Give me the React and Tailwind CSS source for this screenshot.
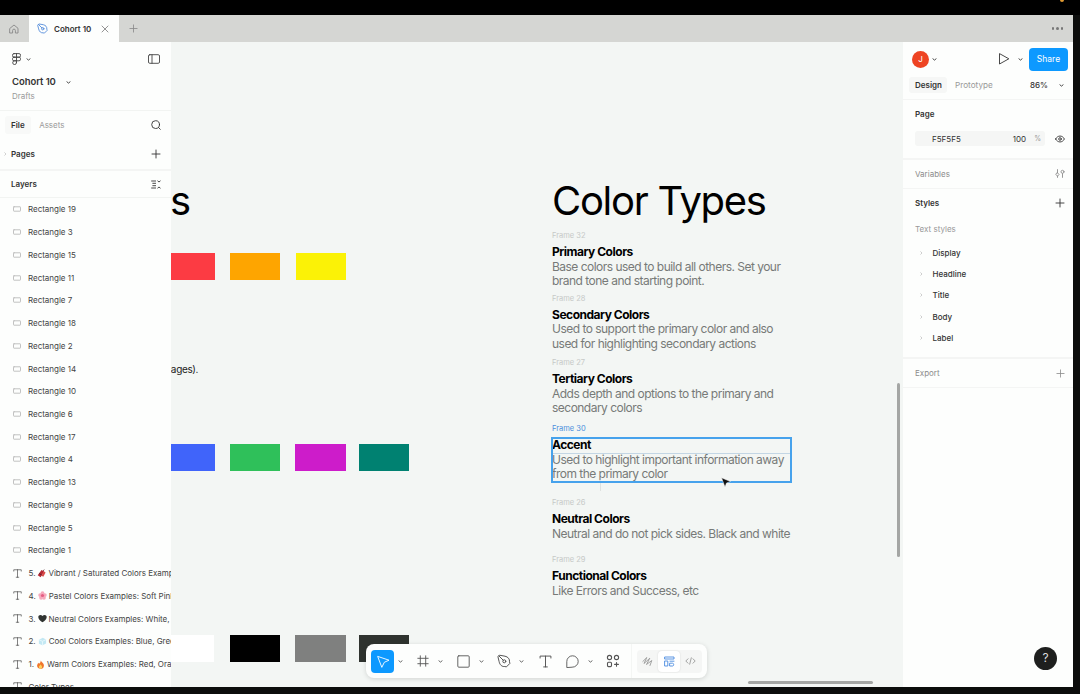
import React from 'react';

const rectangles = [19, 3, 15, 11, 7, 18, 2, 14, 10, 6, 17, 4, 13, 9, 5, 1];

const textLayers = [
    { num: '5.', emoji: 'firecracker', label: 'Vibrant / Saturated Colors Examples' },
    { num: '4.', emoji: 'flower', label: 'Pastel Colors Examples: Soft Pink' },
    { num: '3.', emoji: 'heart', label: 'Neutral Colors Examples: White, Black' },
    { num: '2.', emoji: 'ice', label: 'Cool Colors Examples: Blue, Green' },
    { num: '1.', emoji: 'fire', label: 'Warm Colors Examples: Red, Orange' },
];

const swatches = [
    'left-0 top-[211px] w-[44px] bg-[#fc3b43]',
    'left-[59px] top-[211px] w-[50px] bg-[#fea500]',
    'left-[125px] top-[211px] w-[50px] bg-[#fbf206]',
    'left-0 top-[402px] w-[44px] bg-[#4064fa]',
    'left-[59px] top-[402px] w-[50px] bg-[#2fc05a]',
    'left-[124px] top-[402px] w-[51px] bg-[#cd1cca]',
    'left-[188px] top-[402px] w-[50px] bg-[#008171]',
    'left-0 top-[593px] w-[43px] bg-white',
    'left-[59px] top-[593px] w-[50px] bg-black',
    'left-[124px] top-[593px] w-[51px] bg-[#7f807f]',
    'left-[188px] top-[593px] w-[50px] bg-[#2f332f]',
];

const frames = [
    { pos: 'top-[187px]', frame: 'Frame 32', title: 'Primary Colors', lines: ['Base colors used to build all others. Set your', 'brand tone and starting point.'] },
    { pos: 'top-[249.5px]', frame: 'Frame 28', title: 'Secondary Colors', lines: ['Used to support the primary color and also', 'used for highlighting secondary actions'] },
    { pos: 'top-[314px]', frame: 'Frame 27', title: 'Tertiary Colors', lines: ['Adds depth and options to the primary and', 'secondary colors'] },
    { pos: 'top-[380px]', frame: 'Frame 30', title: 'Accent', active: true, lines: ['Used to highlight important information away', 'from the primary color'] },
    { pos: 'top-[454px]', frame: 'Frame 26', title: 'Neutral Colors', lines: ['Neutral and do not pick sides. Black and white'] },
    { pos: 'top-[511px]', frame: 'Frame 29', title: 'Functional Colors', lines: ['Like Errors and Success, etc'] },
];

const Icon = ({ className = 'size-3', box = '0 0 12 12', children, sw = 0.9 }) => (
    <svg className={`shrink-0 ${className}`} viewBox={box} fill="none" stroke="currentColor" strokeWidth={sw} strokeLinecap="round" strokeLinejoin="round">
        {children}
    </svg>
);

const Chevron = ({ className = '' }) => (
    <Icon className={`h-[3px] w-[5px] ${className}`} box="0 0 5 3"><path d="M.9.8 2.5 2.1 4.1.8" /></Icon>
);

const Plus = ({ className = 'size-[10px]' }) => (
    <Icon className={className} box="0 0 10 10"><path d="M5 1v8M1 5h8" /></Icon>
);

const PenIcon = ({ className = 'size-[14px]', sw = 1 }) => (
    <Icon className={className} box="0 0 14 14" sw={sw}>
        <path d="M1.2 2.4 2.4 1.2 8 2.2c3 .6 4.9 2.9 4.5 5.6l.4 1.6-3.5 3.5-1.6-.4C5.1 12.9 2.8 11 2.2 8z" />
        <path d="m1.8 1.8 4.5 4.5" />
        <circle cx="7.3" cy="7.3" r="1.5" />
    </Icon>
);

const Emoji = ({ name }) => (
    <svg className="mx-[2px] size-[9px] shrink-0" viewBox="0 0 10 10">
        {name === 'firecracker' && <g><path d="m.8 7 4.2-6 3 1.8-4 6.5z" fill="#b52733" /><path d="m5 7.5 2.5-5 2 1.3L7 8.5z" fill="#d94a46" /><path d="m2.5 5 2.6 1.6M7 2l1-1.3" stroke="#51252a" /></g>}
        {name === 'flower' && <g fill="#f6a9bc"><circle cx="5" cy="2.4" r="2.1" /><circle cx="2.4" cy="4.5" r="2.1" /><circle cx="7.6" cy="4.5" r="2.1" /><circle cx="3.4" cy="7.5" r="2.1" /><circle cx="6.6" cy="7.5" r="2.1" /><circle cx="5" cy="5" r="1.8" fill="#e45e83" /></g>}
        {name === 'heart' && <path d="M5 9.3C2.5 7.5.3 5.7.3 3.3.3 1 3.5.1 5 2.3 6.5.1 9.7 1 9.7 3.3 9.7 5.7 7.5 7.5 5 9.3z" fill="#303431" />}
        {name === 'ice' && <g><path d="M1 3 5.3.8 9 2.8v4.4L5 9.3 1 7.5z" fill="#c3e8f3" /><path d="m1 3 4 1.8 4-2M5 4.8v4.5" stroke="#e8f8fc" fill="none" /></g>}
        {name === 'fire' && <g><path d="M5.2.2c.5 2 3.8 3.2 3.6 6.1C8.6 8.7 7 9.8 5 9.8S1.3 8.6 1.2 6.4c0-1.5.8-2.3 1.3-3.4l.9 1.2C4.8 3 5.4 1.8 5.2.2z" fill="#f0762c" /><path d="M5 4.8c.3 1 1.900 1.700 1.800 3C6.700 9 6 9.600 5 9.600S3.200 9 3.200 7.800C3.200 6.600 4.600 6.200 5 4.800z" fill="#fbd15c" /></g>}
    </svg>
);

const TIcon = ({ className = 'size-[9px]' }) => (
    <Icon className={className} box="0 0 12 12"><path d="M1 2.8V1h10v1.8M6 1v10M4.3 11h3.4" /></Icon>
);

const TabBar = () => (
    <div className="flex h-[27px] shrink-0 items-center bg-[#d5d6d3] text-[#888]">
        <div className="flex w-[28px] justify-center">
            <Icon className="size-[10px]" box="0 0 10 10"><path d="M1 4.3 5 1l4 3.3V9H6.4V6.5a1.4 1.4 0 0 0-2.8 0V9H1z" /></Icon>
        </div>
        <div className="ml-px flex h-full w-[90px] items-center bg-[#fdfefd] pl-[8px]">
            <PenIcon className="size-[11px] text-[#5a91dc]" sw={1.2} />
            <span className="ml-[6px] w-[38px] whitespace-nowrap text-[8px] font-semibold text-[#333]">Cohort 10</span>
            <Icon className="ml-[9px] size-2" box="0 0 8 8"><path d="m1 1 6 6M7 1 1 7" /></Icon>
        </div>
        <Plus className="ml-[10px] size-[9px]" />
        <div className="ml-auto mr-[10px] flex gap-[2px]">
            <i className="size-[2.5px] rounded-full bg-[#777]" />
            <i className="size-[2.5px] rounded-full bg-[#777]" />
            <i className="size-[2.5px] rounded-full bg-[#777]" />
        </div>
    </div>
);

const LeftPanel = () => (
    <aside className="flex w-[171px] shrink-0 flex-col overflow-hidden bg-[#fdfefd] text-[#444]">
        <div className="h-[69px] shrink-0 border-b border-[#f2f4f2] pl-3 pr-[11px] pt-[10px]">
            <div className="flex h-[14px] items-center">
                <Icon className="h-[12px] w-[9px]" box="0 0 9 12"><rect x=".5" y=".6" width="8" height="3.6" rx="1.5" /><rect x=".5" y="4.2" width="8" height="3.6" rx="1.5" /><path d="M4.5.6v9M4.5 7.8H2.3a1.9 1.9 0 1 0 2.2 1.8" /></Icon>
                <Chevron className="ml-[5px]" />
                <Icon className="ml-auto h-[10px] w-[12px]" box="0 0 12 10"><rect x=".5" y=".7" width="11" height="8.6" rx="1.3" /><path d="M4 .7v8.6" /></Icon>
            </div>
            <div className="mt-[8px] flex h-4 items-center text-[9.5px] font-semibold tracking-[-0.06px] text-[#333]">
                <span className="w-[44px] whitespace-nowrap">Cohort 10</span><Chevron className="ml-[10px]" />
            </div>
            <div className="h-3 text-[8px] leading-3 text-[#999]">Drafts</div>
        </div>
        <div className="flex h-[28px] shrink-0 items-center pl-[5px] pr-[10px] text-[8px]">
            <span className="rounded-[3px] bg-[#f8f9f8] px-[6px] py-[3px] font-semibold text-[#333]">File</span>
            <span className="ml-[8.5px] text-[#9b9b9b]">Assets</span>
            <Icon className="ml-auto size-[10px] text-[#333]" box="0 0 10 10"><circle cx="4.6" cy="4.6" r="3.9" /><path d="m7.5 7.5 1.8 1.8" /></Icon>
        </div>
        <div className="flex h-[32px] shrink-0 items-center border-b-2 border-[#f4f5f4] pl-[4px] pr-[10px] text-[8px] font-semibold text-[#333]">
            <Icon className="h-[4px] w-[3px] text-[#ccc]" box="0 0 3 4"><path d="m.7.7 1.3 1.3L.7 3.3" /></Icon>
            <span className="ml-[4px]">Pages</span><Plus className="ml-auto size-[10px]" />
        </div>
        <div className="flex h-[27px] shrink-0 items-center border-b border-[#f2f4f2] pl-[11px] pr-[10px] text-[8px] font-semibold text-[#333]">
            Layers
            <Icon className="ml-auto h-[9px] w-[10px]" box="0 0 10 9"><path d="M.6 1h4M1.8 3.3h2.8M1.8 5.7h2.8M.6 8h4M6.8 1l1.2 1 1.2-1M6.8 8l1.2-1 1.2 1" /></Icon>
        </div>
        <div className="flex flex-col text-[8px] tracking-[-0.02px]">
            {rectangles.map(n => (
                <div key={n} className="flex h-[22.74px] shrink-0 items-center pl-[13px]">
                    <Icon className="h-[6px] w-[8px] text-[#bbb]" box="0 0 8 6"><rect x=".5" y=".8" width="7" height="4.4" rx=".5" /></Icon>
                    <span className="ml-[7px]">Rectangle {n}</span>
                </div>
            ))}
            {textLayers.map(l => (
                <div key={l.num} className="flex h-[22.74px] shrink-0 items-center whitespace-nowrap pl-[13px]">
                    <TIcon /><span className="ml-[6.5px]">{l.num}</span><Emoji name={l.emoji} /><span>{l.label}</span>
                </div>
            ))}
            <div className="flex h-[22.74px] shrink-0 items-center pl-[13px]">
                <TIcon /><span className="ml-[6.5px]">Color Types</span>
            </div>
        </div>
    </aside>
);

const Toolbar = () => (
    <div className="absolute left-[195px] top-[602px] flex h-[34px] w-[341px] items-center rounded-[8px] bg-[#fdfefd] pl-[5px] text-[#555] shadow-[0_1px_5px_rgba(0,0,0,0.14)]">
        <div className="flex size-[23px] items-center justify-center rounded-[4px] bg-[#0d99ff] text-white">
            <Icon className="ml-[2px] size-[13px]" box="0 0 13 13"><path d="M1 1.5 12 5.2 7.3 7.3 5 12z" /></Icon>
        </div>
        <Chevron className="ml-[4px]" />
        <Icon className="ml-[14px] size-[12px]" box="0 0 12 12"><path d="M3.3.8v10.4M8.7.8v10.4M.8 3.3h10.4M.8 8.7h10.4" /></Icon>
        <Chevron className="ml-[9px]" />
        <Icon className="ml-[14px] size-[13px]" box="0 0 13 13"><rect x=".8" y=".8" width="11.4" height="11.4" rx="1" /></Icon>
        <Chevron className="ml-[8.5px]" />
        <PenIcon className="ml-[13.5px] size-[14px]" />
        <Chevron className="ml-[8px]" />
        <TIcon className="ml-[14.5px] size-[13px]" />
        <Icon className="ml-[14.5px] size-[13px]" box="0 0 13 13"><path d="M.8 12.2V6.5a5.7 5.7 0 1 1 5.7 5.7z" /></Icon>
        <Chevron className="ml-[9px]" />
        <Icon className="ml-[13px] size-[14px]" box="0 0 14 14" sw={1.1}><circle cx="3.5" cy="3.5" r="2.1" /><circle cx="10.5" cy="3.5" r="2.1" /><rect x="1.5" y="8.2" width="4" height="4.4" rx="1" /><path d="M10.5 8.5v3.8M8.6 10.4h3.8" /></Icon>
        <div className="ml-[11px] h-[34px] w-px bg-[#f4f6f4]" />
        <div className="ml-[5px] flex h-[23px] w-[65px] items-center rounded-[4px] bg-[#f5f6f5] text-[#999]">
            <div className="flex w-[21px] justify-center">
                <Icon className="size-[11px]" box="0 0 11 11"><path d="M.8 5.5 4.8 1.5 2 7.5 7.8 2.2 4.5 8.5 9.8 4.5 8 9.5" /></Icon>
            </div>
            <div className="flex h-[21px] w-[22px] items-center justify-center rounded-[4px] bg-white text-[#4a8be0] shadow-[0_0_2px_rgba(0,0,0,0.12)]">
                <Icon className="size-[11px]" box="0 0 11 11"><path d="M1 1h9v2H1zM1 5h2.8v5H1zM6 5.2h4M6 7.2h2.5c1.6 0 1.6 2.8 0 2.8H6z" /></Icon>
            </div>
            <div className="flex w-[21px] justify-center">
                <Icon className="h-[8px] w-[11px]" box="0 0 11 8"><path d="M3 1.8.8 4 3 6.2M8 1.8 10.2 4 8 6.2M6.3.8 4.7 7.2" /></Icon>
            </div>
        </div>
    </div>
);

const Canvas = () => (
    <main className="relative w-[732px] shrink-0 overflow-hidden bg-[#f3f6f4]">
        <div className="absolute left-[-1px] top-[134px] text-[40px] leading-[50px] text-black">s</div>
        {swatches.map(s => <div key={s} className={`absolute h-[27px] ${s}`} />)}
        <div className="absolute left-[-6px] top-[320px] text-[10px] leading-[14px] tracking-[-0.35px] text-[#222]">pages).</div>

        <h1 className="absolute left-[381px] top-[134px] whitespace-nowrap text-[40px] leading-[50px] tracking-[-1.3px] text-black">Color Types</h1>

        {frames.map(f => (
            <div key={f.title} className={`absolute left-[381px] whitespace-nowrap ${f.pos}`}>
                <div className={`h-[15px] text-[7.5px] leading-[13px] ${f.active ? 'text-[#4b8fdc]' : 'text-[#c6c9c7]'}`}>{f.frame}</div>
                <div className="text-[12px] font-bold leading-[15.5px] tracking-[-0.48px] text-black">{f.title}</div>
                {f.lines.map(line => (
                    <div key={line} className="text-[12px] leading-[14.6px] tracking-[-0.52px] text-[#777a78]">{line}</div>
                ))}
            </div>
        ))}

        {/* selection outline and the hovered text box inside it */}
        <div className="absolute left-[380px] top-[395px] h-[46px] w-[241px] border-2 border-[#46a2ec]">
            <div className="mt-[14px] h-px bg-[#c3d6e4]" />
        </div>
        <div className="absolute left-[429px] top-[441px] h-[8px] w-px bg-[#dfe2e0]" />
        <svg className="absolute left-[550px] top-[435px] h-[11px] w-[10px]" viewBox="0 0 10 11"><path d="M.5.8 9.5 4.5 5.5 6 4 10z" fill="#111" stroke="#fff" strokeWidth=".5" /></svg>

        <Toolbar />
        <div className="absolute left-[726px] top-[341px] h-[174px] w-[3px] rounded-full bg-[#a4a6a4]" />
        <div className="absolute left-[577px] top-[639px] h-[3px] w-[125px] rounded-full bg-[#a4a6a4]" />
    </main>
);

const RightPanel = () => (
    <aside className="flex w-[170px] shrink-0 flex-col bg-[#fdfefd] text-[8px] text-[#333]">
        <div className="flex h-[34px] shrink-0 items-center pl-[9px] pr-[5px]">
            <div className="flex size-[17px] items-center justify-center rounded-full bg-[#ee4423] text-[8px] text-white">J</div>
            <Chevron className="ml-[3px]" />
            <Icon className="ml-[61px] size-[12px]" box="0 0 12 12"><path d="M1.5 1v10l9-5z" /></Icon>
            <Chevron className="ml-[8px]" />
            <button className="ml-auto h-[23px] w-[39px] rounded-[4px] bg-[#0d99ff] text-[8.5px] text-white">Share</button>
        </div>
        <div className="flex h-[23.5px] shrink-0 items-center border-b border-[#f4f5f4] pb-[4px] pl-[6px] pr-[9px]">
            <span className="w-[38px] rounded-[3px] bg-[#f6f7f6] py-[2px] pl-[6px] font-semibold">Design</span>
            <span className="ml-[8px] text-[8.2px] text-[#999]">Prototype</span>
            <span className="ml-auto text-[8px] font-medium">86%</span><Chevron className="ml-[11px]" />
        </div>
        <div className="h-[60.5px] shrink-0 border-b-2 border-[#f4f5f4] pl-[12px] pr-[8px] pt-[8.5px]">
            <div className="h-[12px] font-semibold leading-[12px]">Page</div>
            <div className="mt-[11px] flex h-[15px] items-center">
                <div className="flex h-[15px] w-[130px] items-center rounded-[3px] bg-[#f5f6f5] pl-[17px]">
                    <span>F5F5F5</span><span className="ml-auto">100</span><span className="ml-[8px] mr-[4px] mt-px text-[7px] text-[#999]">%</span>
                </div>
                <Icon className="ml-auto h-[8px] w-[10px]" box="0 0 10 8"><path d="M.6 4C2.7 0 7.3 0 9.4 4 7.3 8 2.7 8 .6 4z" /><circle cx="5" cy="4" r="1.3" /></Icon>
            </div>
        </div>
        <div className="flex h-[28.5px] shrink-0 items-center border-b border-[#f4f5f4] pl-[12px] pr-[8px] text-[#8c8c8c]">
            Variables
            <Icon className="ml-auto h-[9px] w-[10px]" box="0 0 10 9"><path d="M2.5.6v3.2M2.5 3.8 4 5.5 2.5 7.2 1 5.5zM2.5 7.2v1.2M7.5 8.4V4.7" /><circle cx="7.5" cy="2.8" r="1.5" /></Icon>
        </div>
        <div className="h-[170.5px] shrink-0 border-b-2 border-[#f4f5f4] pl-[12px] pr-[8px]">
            <div className="flex h-[29px] items-center font-semibold">Styles<Plus className="ml-auto size-[10px]" /></div>
            <div className="flex h-[23px] items-center text-[#999]">Text styles</div>
            <div className="mt-[1.5px] flex flex-col">
                {['Display', 'Headline', 'Title', 'Body', 'Label'].map(s => (
                    <div key={s} className="flex h-[21.4px] items-center pl-[5px] font-medium">
                        <Icon className="h-[4px] w-[3px] text-[#c8c8c8]" box="0 0 3 4"><path d="m.7.7 1.3 1.3L.7 3.3" /></Icon>
                        <span className="ml-[9.5px]">{s}</span>
                    </div>
                ))}
            </div>
        </div>
        <div className="flex h-[29px] shrink-0 items-center border-b border-[#f4f5f4] pl-[12px] pr-[8px] text-[#8c8c8c]">Export<Plus className="ml-auto size-[9px]" /></div>
        <div className="mb-[17px] ml-auto mr-[16px] mt-auto flex size-[23px] items-center justify-center rounded-full bg-[#1e1f1e] text-[12px] text-[#ddd]">?</div>
    </aside>
);

const App = () => (
    <div className="relative h-[694px] w-[1080px] overflow-hidden bg-[#0c0d0c] pt-[15px] font-['Inter','Liberation_Sans',sans-serif]">
        <div className="absolute inset-x-0 top-0 h-[15px] bg-black" />
        <div className="absolute left-[1060px] top-[-2px] size-[4px] rounded-full bg-[#e19a31]" />
        <div className="flex h-[671.5px] w-[1073px] flex-col">
            <TabBar />
            <div className="flex min-h-0 grow">
                <LeftPanel />
                <Canvas />
                <RightPanel />
            </div>
        </div>
    </div>
);

export default App;
